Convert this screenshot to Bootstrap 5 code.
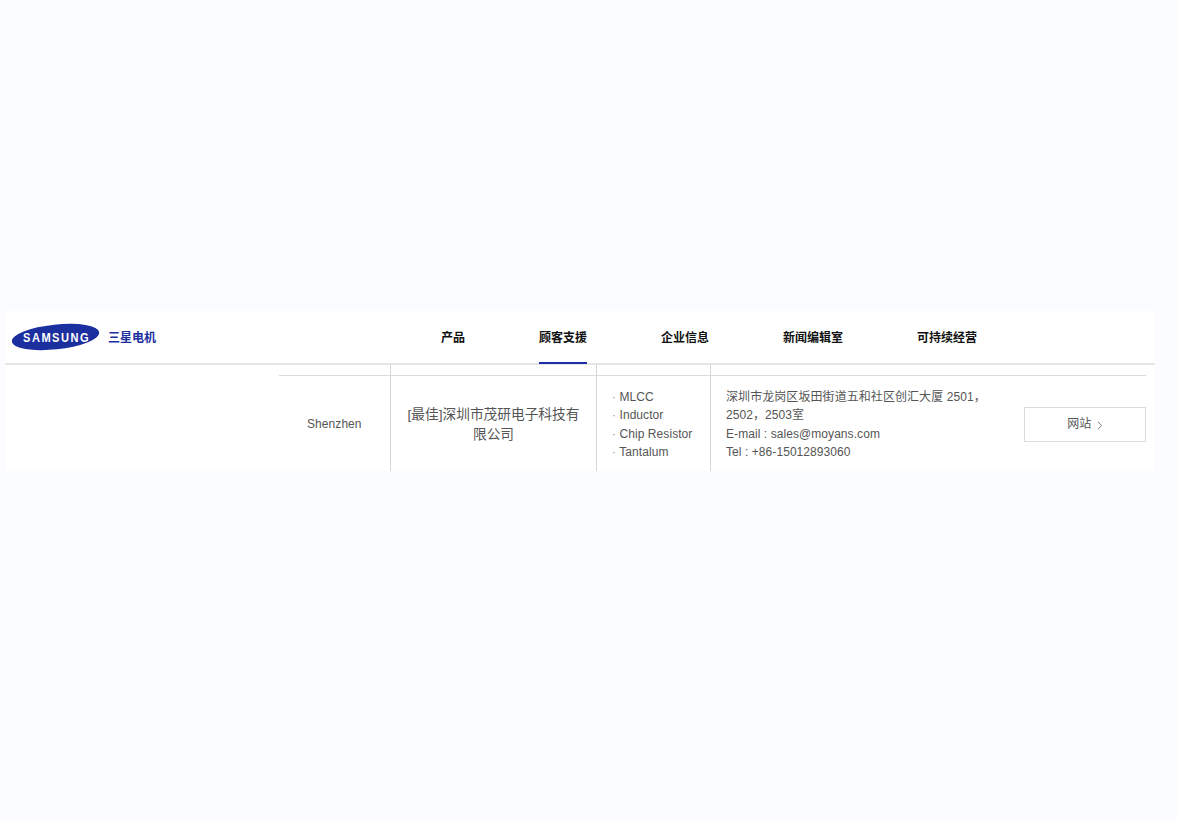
<!DOCTYPE html>
<html lang="zh-CN">
<head>
<meta charset="utf-8">
<title>三星电机</title>
<link href="https://cdn.jsdelivr.net/npm/bootstrap@5.3.0/dist/css/bootstrap.min.css" rel="stylesheet">
<style>
html,body{height:100%}
body{background:#fbfcff;font-family:"Liberation Sans","Noto Sans CJK SC",sans-serif;color:#555;font-size:12px;letter-spacing:.07px;padding-top:311px}
.sheet{width:1150px;margin-left:5px;height:160px;background:#fff;overflow:hidden}
.topbar{height:54px;border-bottom:2px solid #e6e6e6}
.brand{width:403px;padding-left:7px;padding-top:11px;height:100%}
.brand svg{display:block}
.brand-name{color:#1c2f9f;font-size:12px;font-weight:700;letter-spacing:0;margin-left:8px;margin-top:8px;line-height:17px}
.menu{gap:74px;padding-left:33px}
.menu a{display:block;height:53px;line-height:54px;font-size:12px;font-weight:700;letter-spacing:0;color:#111;text-decoration:none}
.menu a.on{border-bottom:2px solid #1c2fa8}
.rowgrid{display:grid;grid-template-columns:112px 206px 114px 312px 123px;grid-template-rows:11px 95px;margin-left:274px;width:867px}
.cellx{border-right:1px solid #d6d6d6}
.cellx.last{border-right:0}
.sp{border-bottom:1px solid #dcdcdc}
.city{padding-top:38px;padding-left:28px;line-height:20px;color:#555}
.firm{font-size:13.7px;letter-spacing:0;line-height:20px;text-align:center;padding:29px 11px 0 11px;color:#555}
.prods{padding:12px 0 0 15px;line-height:18.33px;font-size:12px;color:#555}
.prods span{color:#999}
.addr{padding:12px 0 0 15px;line-height:18.33px;color:#555}
.webcell{padding-top:31px;padding-left:1px}
.webbtn{display:block;width:122px;height:35px;line-height:33px;border:1px solid #dcdcdc;border-radius:0;padding:0;text-align:center;font-size:12px;color:#555;background:#fff}
.webbtn svg{margin-left:2px;vertical-align:-2px}
</style>
</head>
<body>
<div class="sheet">
  <div class="topbar d-flex">
    <div class="brand d-flex">
      <svg width="88" height="30" viewBox="0 0 88 30">
        <ellipse cx="43.5" cy="15" rx="44" ry="12.4" transform="rotate(-6 43.5 15)" fill="#1c2f9f"/>
        <text transform="translate(11 20) scale(.85 1)" font-family="Liberation Sans" font-weight="700" font-size="13" letter-spacing="1.8" fill="#fff">SAMSUNG</text>
      </svg>
      <div class="brand-name">三星电机</div>
    </div>
    <nav class="menu d-flex">
      <a href="#">产品</a>
      <a href="#" class="on">顾客支援</a>
      <a href="#">企业信息</a>
      <a href="#">新闻编辑室</a>
      <a href="#">可持续经营</a>
    </nav>
  </div>
  <div class="rowgrid">
    <div class="cellx sp"></div><div class="cellx sp"></div><div class="cellx sp"></div><div class="cellx last sp"></div><div class="cellx last sp"></div>
    <div class="cellx city">Shenzhen</div>
    <div class="cellx firm">[最佳]深圳市茂研电子科技有限公司</div>
    <div class="cellx prods">
      <div><span>·</span> MLCC</div>
      <div><span>·</span> Inductor</div>
      <div><span>·</span> Chip Resistor</div>
      <div><span>·</span> Tantalum</div>
    </div>
    <div class="cellx last addr">
      深圳市龙岗区坂田街道五和社区创汇大厦 2501，<br>2502，2503室<br>E-mail : sales@moyans.com<br>Tel : +86-15012893060
    </div>
    <div class="cellx last webcell">
      <a href="#" class="btn webbtn">网站 <svg width="6" height="9" viewBox="0 0 6 9"><path d="M1 .8 4.6 4.5 1 8.2" fill="none" stroke="#777" stroke-width="1"/></svg></a>
    </div>
  </div>
</div>
<script src="https://cdn.jsdelivr.net/npm/bootstrap@5.3.0/dist/js/bootstrap.bundle.min.js"></script>
</body>
</html>
